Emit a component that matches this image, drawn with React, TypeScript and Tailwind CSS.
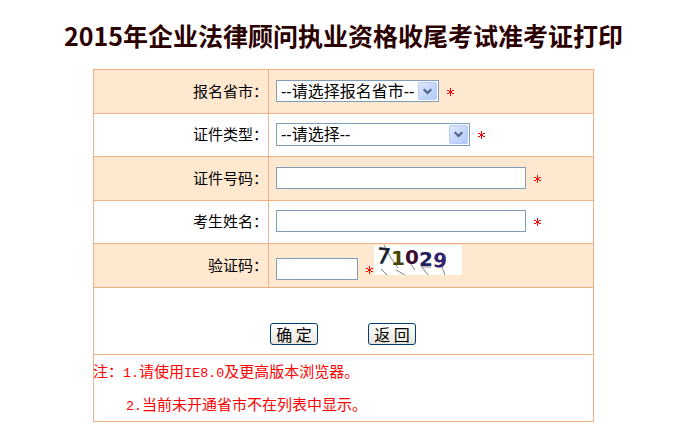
import type { ReactNode } from "react"

function Star({ className = "" }: { className?: string }) {
    return (
        <svg className={`h-[9px] w-[9px] shrink-0 ${className}`} viewBox="0 0 9 9" fill="#ff0000" shapeRendering="crispEdges">
            <path d="M4 0h1v8h-1zM1 2h2v1h-2zM6 2h2v1h-2zM3 3h3v2h-3zM1 5h2v1h-2zM6 5h2v1h-2z" />
        </svg>
    )
}

function Row({ label, className, children }: { label: string; className: string; children: ReactNode }) {
    return (
        <div className={`flex border-b border-[#efb086] ${className}`}>
            <div className="flex w-[175px] shrink-0 items-center justify-end border-r border-[#efb086] pb-px text-[15px] whitespace-nowrap">
                {label}
            </div>
            <div className="flex grow items-start pl-[7px]">{children}</div>
        </div>
    )
}

function SelectBox({ text, className }: { text: string; className: string }) {
    return (
        <div className={`flex justify-between border border-[#7f9db9] bg-white ${className}`}>
            <span className="pl-1 font-['Liberation_Sans','Noto_Sans_CJK_SC',sans-serif] text-[16px] leading-[21px] whitespace-nowrap">
                {text}
            </span>
            <span className="m-px flex w-[19px] shrink-0 items-center justify-center rounded-[2px] border border-[#b8cbf6] bg-linear-to-br from-[#dce7ff] to-[#b3c9f8]">
                <svg className="h-[7px] w-[9px]" viewBox="0 0 9 7" fill="none" stroke="#4d6185" strokeWidth="2">
                    <path d="M0.7 1.2L4.5 5L8.3 1.2" />
                </svg>
            </span>
        </div>
    )
}

function TextBox({ className }: { className: string }) {
    return <input type="text" className={`h-[22px] shrink-0 border border-[#7f9db9] bg-white outline-none ${className}`} />
}

function Captcha() {
    return (
        <svg className="mt-px h-[30px] w-[88px]" viewBox="0 0 88 30">
            <rect width="88" height="30" fill="#fff" />
            <g stroke="#777" strokeWidth="0.9" fill="none">
                <path d="M10 0L17 13L24 23M7 24L13 30M22 25L31 30M37 19L41 25M47 21L54 30M48 22H57M68 22L71 30" />
            </g>
            <g fontFamily="DejaVu Sans" fontWeight="bold" fontSize="20">
                <text x="3" y="18.5" fill="#16212b" fontSize="21" fontWeight="normal" stroke="#16212b" strokeWidth="0.8" transform="rotate(5 10 12)">7</text>
                <text x="17" y="19.5" fill="#454500">1</text>
                <text x="31" y="19" fill="#3a0b32">0</text>
                <text x="45" y="21" fill="#202060">2</text>
                <text x="59" y="22.5" fill="#35216e" transform="rotate(5 66 16)">9</text>
            </g>
        </svg>
    )
}

function Button({ text }: { text: string }) {
    return (
        <button className="h-[22px] w-12 rounded-[3px] border border-[#003c74] bg-linear-to-b from-white to-[#e8e6dc] text-[16px] leading-[18px] whitespace-nowrap">
            {text}
        </button>
    )
}

function Latin({ children }: { children: ReactNode }) {
    return <span className="font-['Liberation_Mono',monospace] text-[13.4px] leading-none">{children}</span>
}

export default function App() {
    return (
        <div lang="zh-CN" className="h-[447px] w-[676px] overflow-hidden bg-white font-['Noto_Sans_CJK_SC',sans-serif] text-black">
            <h1 className="ml-[93px] flex h-[69px] w-[501px] justify-center pt-[17px] text-[25px] leading-9 font-bold whitespace-nowrap text-[#2b0000]">
                2015年企业法律顾问执业资格收尾考试准考证打印
            </h1>
            <div className="ml-[93px] w-[501px] border-x border-t border-[#efb086]">
                <Row label="报名省市：" className="h-11 bg-[#fee9d0]">
                    <SelectBox text="--请选择报名省市--" className="mt-2.5 h-[22px] w-[163px]" />
                    <Star className="mt-[18px] ml-[7px]" />
                </Row>
                <Row label="证件类型：" className="h-[43px]">
                    <SelectBox text="--请选择--" className="mt-[9px] h-[23px] w-[194px]" />
                    <Star className="mt-[17px] ml-[7px]" />
                </Row>
                <Row label="证件号码：" className="h-11 bg-[#fee9d0]">
                    <TextBox className="mt-2.5 w-[250px]" />
                    <Star className="mt-[18px] ml-[7px]" />
                </Row>
                <Row label="考生姓名：" className="h-[43px]">
                    <TextBox className="mt-[9px] w-[250px]" />
                    <Star className="mt-[17px] ml-[7px]" />
                </Row>
                <Row label="验证码：" className="h-11 bg-[#fee9d0]">
                    <TextBox className="mt-3.5 w-[82px]" />
                    <Star className="mt-[22px] ml-[7px]" />
                    <Captcha />
                </Row>
                <div className="flex h-[67px] gap-[50px] border-b border-[#efb086] pt-[35px] pl-[176px]">
                    <Button text="确 定" />
                    <Button text="返 回" />
                </div>
                <div className="h-[67px] border-b border-[#efb086] text-[15px] leading-[31px] whitespace-nowrap text-[#ff0000]">
                    <p className="-ml-px h-[33px]">
                        注：<Latin>1.</Latin>请使用<Latin>IE8.0</Latin>及更高版本浏览器。
                    </p>
                    <p className="h-[33px] pl-8">
                        <Latin>2.</Latin>当前未开通省市不在列表中显示。
                    </p>
                </div>
            </div>
        </div>
    )
}
